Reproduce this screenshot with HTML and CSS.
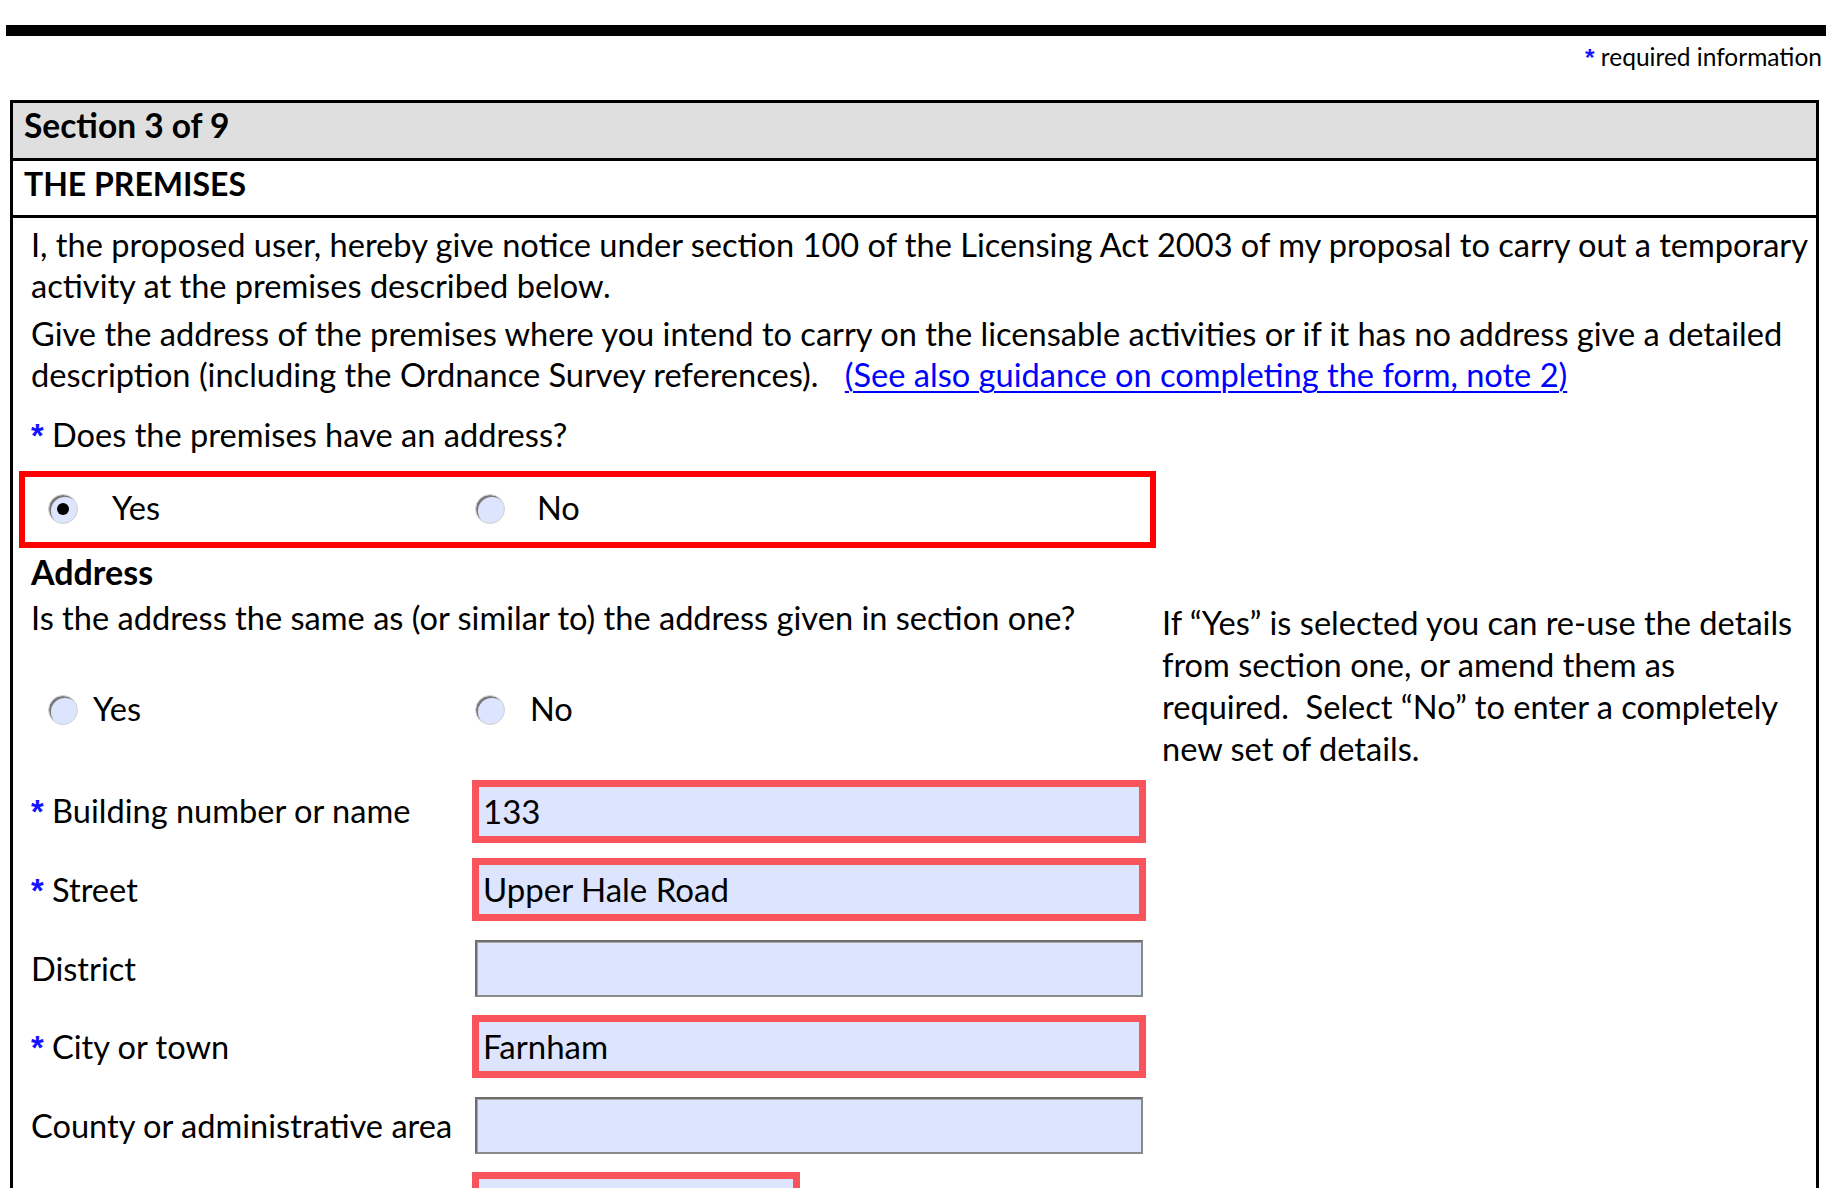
FILE: index.html
```html
<!DOCTYPE html>
<html lang="en">
<head>
<meta charset="utf-8">
<title>Section 3 of 9 - The Premises</title>
<link rel="stylesheet" href="styles.css">
</head>
<body>
<div class="topbar"></div>
<div class="req-note"><span class="ast">*</span> required information</div>
<div class="section">
  <div class="sec-head">Section 3 of 9</div>
  <div class="sec-title">THE PREMISES</div>
  <div class="sec-body">
    <p class="p1">I, the proposed user, hereby give notice under section 100 of the Licensing Act 2003 of my proposal to carry out a temporary<br>activity at the premises described below.</p>
    <p class="p2">Give the address of the premises where you intend to carry on the licensable activities or if it has no address give a detailed<br>description (including the Ordnance Survey references). <a class="guide" href="#note2">(See also guidance on completing the form, note 2)</a></p>
    <p class="q"><span class="ast">*</span> Does the premises have an address?</p>
    <div class="radio-group">
      <div class="opt opt-yes1"><span class="radio on"></span><span class="opt-text">Yes</span></div>
      <div class="opt opt-no1"><span class="radio"></span><span class="opt-text">No</span></div>
    </div>
    <h3 class="addr">Address</h3>
    <div class="addr-grid">
      <div class="addr-left">
        <p class="same">Is the address the same as (or similar to) the address given in section one?</p>
        <div class="radio-row">
          <div class="opt opt-yes2"><span class="radio"></span><span class="opt-text">Yes</span></div>
          <div class="opt opt-no2"><span class="radio"></span><span class="opt-text">No</span></div>
        </div>
        <div class="fields">
          <div class="frow"><div class="flabel"><span class="ast">*</span> Building number or name</div><div class="field req">133</div></div>
          <div class="frow"><div class="flabel"><span class="ast">*</span> Street</div><div class="field req">Upper Hale Road</div></div>
          <div class="frow"><div class="flabel">District</div><div class="field"></div></div>
          <div class="frow"><div class="flabel"><span class="ast">*</span> City or town</div><div class="field req">Farnham</div></div>
          <div class="frow"><div class="flabel">County or administrative area</div><div class="field"></div></div>
          <div class="frow"><div class="flabel"></div><div class="field req short"></div></div>
        </div>
      </div>
      <div class="addr-right">
        <p class="note">If “Yes” is selected you can re-use the details<br>from section one, or amend them as<br>required.&nbsp; Select “No” to enter a completely<br>new set of details.</p>
      </div>
    </div>
  </div>
</div>
</body>
</html>
```

FILE: styles.css
```css
html, body {
  margin: 0;
  padding: 0;
  background: #ffffff;
}

body {
  font-family: Lato, "Open Sans", "Liberation Sans", sans-serif;
  font-size: 32.6px;
  color: #000000;
  width: 1830px;
  overflow: hidden;
}

p, h3 {
  margin: 0;
}

.ast {
  color: #1414ff;
  font-family: "Liberation Sans", Arial, sans-serif;
  font-weight: 700;
}

.topbar {
  height: 11px;
  background: #000000;
  margin: 25px 4px 0 6px;
}

.req-note {
  text-align: right;
  font-size: 24.5px;
  line-height: 30px;
  margin-top: 6px;
  padding-right: 8px;
}

.section {
  margin: 27px 0 0 10px;
  width: 1809px;
  box-sizing: border-box;
  border: 3px solid #000000;
  border-bottom: none;
}

.sec-head {
  height: 55px;
  background: #dfdfdf;
  border-bottom: 3px solid #000000;
  font-size: 33.5px;
  font-weight: 700;
  line-height: 45px;
  padding-left: 11px;
}

.sec-title {
  height: 54px;
  border-bottom: 3px solid #000000;
  font-size: 32px;
  font-weight: 700;
  line-height: 45px;
  padding-left: 11px;
}

.sec-body {
  padding: 0 0 80px 18px;
  line-height: 41px;
}

.p1 {
  margin-top: 6px;
  white-space: nowrap;
}

.p2 {
  margin-top: 7px;
  white-space: nowrap;
}

.guide {
  margin-left: 18px;
  color: #0000ff;
  text-decoration: underline;
  text-decoration-thickness: 2px;
  text-underline-offset: 4px;
}

.q {
  margin-top: 18.5px;
}

.radio-group {
  margin: 15px 0 0 -12px;
  width: 1137px;
  height: 77px;
  box-sizing: border-box;
  border: 6px solid #ff0000;
  display: flex;
  align-items: center;
  padding-left: 23px;
}

.opt {
  display: flex;
  align-items: center;
}

.opt-text {
  padding-bottom: 4px;
}

.opt-yes1 {
  width: 427px;
  gap: 34px;
}

.opt-no1 {
  gap: 32px;
}

.radio {
  width: 30px;
  height: 30px;
  flex: none;
  box-sizing: border-box;
  border-radius: 50%;
  background: #dde4fd;
  border: 1px solid #d2d2d2;
  box-shadow: inset 2px 2px 0 0 #7a7a7a;
  display: flex;
  align-items: center;
  justify-content: center;
}

.radio.on::after {
  content: "";
  width: 12px;
  height: 12px;
  border-radius: 50%;
  background: #000000;
}

.addr {
  margin-top: 3px;
  font-size: 34px;
  font-weight: 700;
  line-height: 41px;
}

.addr-grid {
  margin-top: 5px;
  display: grid;
  grid-template-columns: 1131px 1fr;
}

.same {
  white-space: nowrap;
}

.radio-row {
  margin-top: 52px;
  display: flex;
  align-items: center;
  padding-left: 17px;
  height: 41px;
}

.opt-yes2 {
  width: 427px;
  gap: 15px;
}

.opt-no2 {
  gap: 25px;
}

.fields {
  margin-top: 52px;
  display: flex;
  flex-direction: column;
  gap: 21.5px;
}

.frow {
  display: flex;
  align-items: center;
}

.flabel {
  width: 444px;
  flex: none;
  white-space: nowrap;
}

.field {
  width: 668px;
  height: 57px;
  box-sizing: border-box;
  border: 2px solid #6e6e6e;
  border-right-color: #8a8a8a;
  border-bottom-color: #8a8a8a;
  box-shadow: inset 1px 1px 0 #a9a9a9;
  background: #dde4fd;
  font-size: 33px;
  padding-left: 6px;
  display: flex;
  align-items: center;
}

.field.req {
  outline: 7px solid #f9545c;
  outline-offset: -4px;
}

.field.short {
  width: 322px;
}

.addr-right {
  padding-top: 5.5px;
}

.note {
  line-height: 42px;
  white-space: nowrap;
}
```
